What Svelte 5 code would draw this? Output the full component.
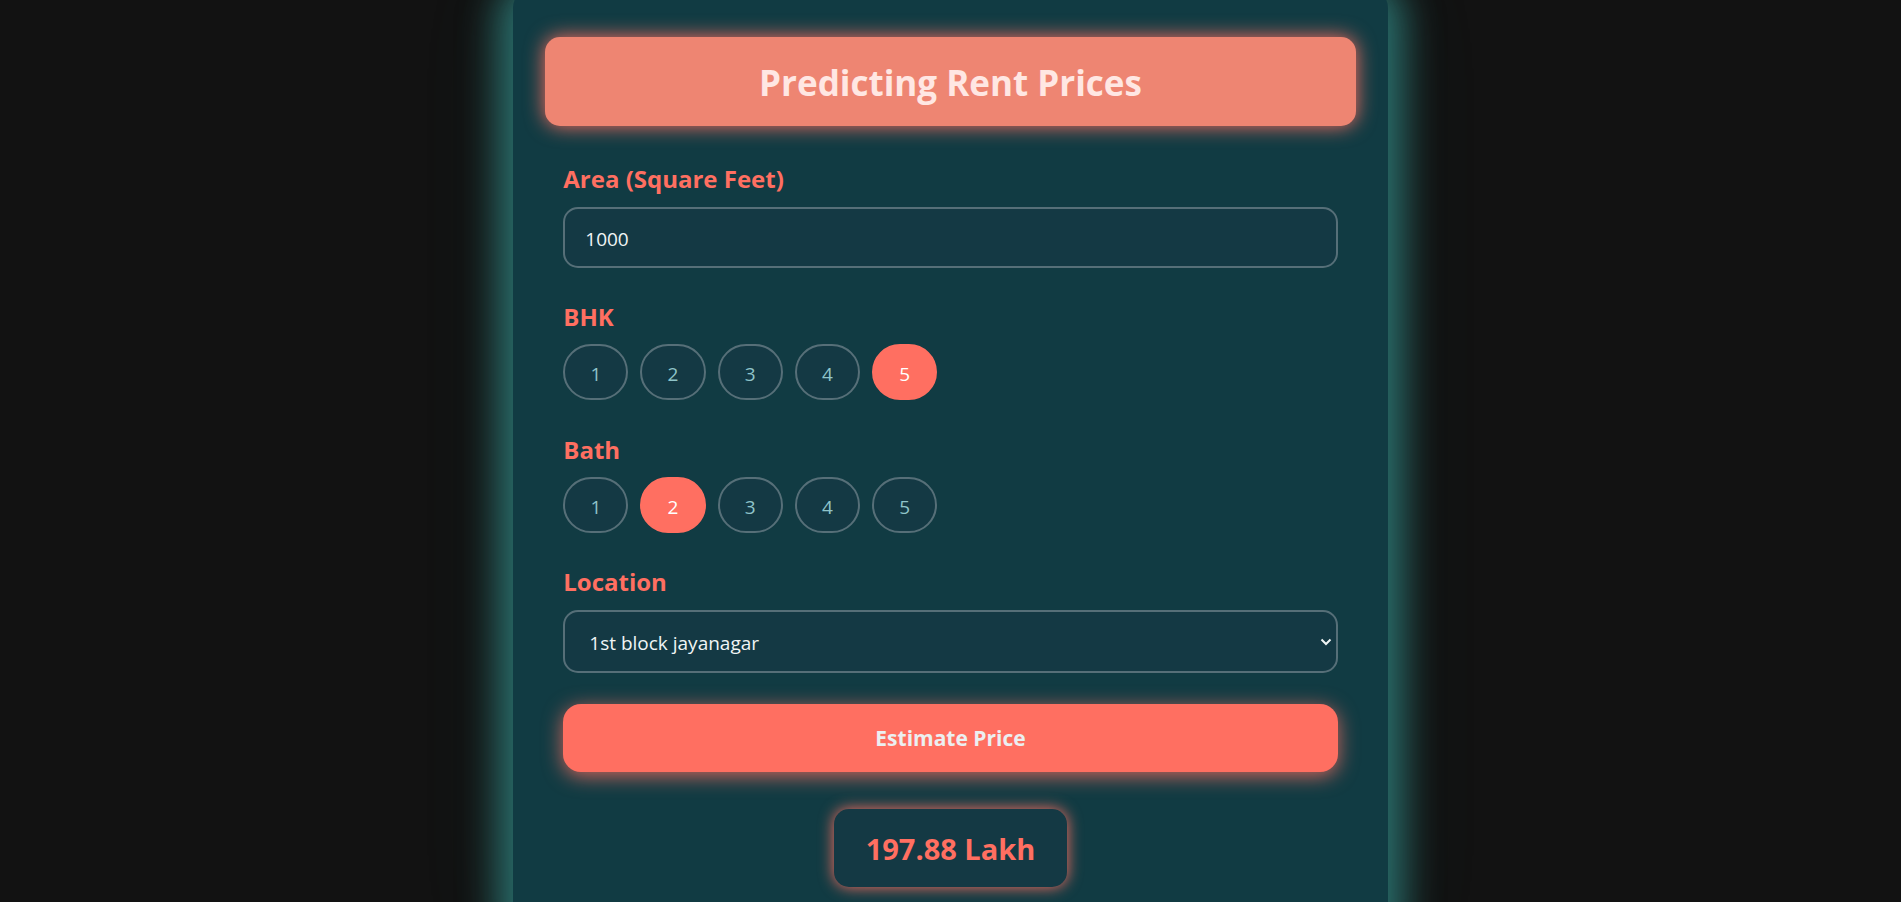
<script>
  const choices = [1, 2, 3, 4, 5];
  const locations = ['1st block jayanagar', '1st phase jp nagar', '2nd phase judicial layout'];

  let area = $state('1000');
  let bhk = $state(5);
  let bath = $state(2);
  let location = $state(locations[0]);
</script>

{#snippet picker(name, title, current, choose)}
  <fieldset>
    <legend>{title}</legend>
    <div class="pills">
      {#each choices as n}
        <label class="pill">
          <input type="radio" {name} value={n} checked={current === n} onchange={() => choose(n)} />
          <span>{n}</span>
        </label>
      {/each}
    </div>
  </fieldset>
{/snippet}

<main class="page">
  <div class="card">
    <h1>Predicting Rent Prices</h1>
    <form onsubmit={(e) => e.preventDefault()}>
      <label class="caption" for="area">Area (Square Feet)</label>
      <input class="control" id="area" type="text" bind:value={area} />

      {@render picker('bhk', 'BHK', bhk, (n) => (bhk = n))}
      {@render picker('bath', 'Bath', bath, (n) => (bath = n))}

      <label class="caption" for="location">Location</label>
      <div class="dropdown">
        <select class="control" id="location" bind:value={location}>
          {#each locations as place}
            <option>{place}</option>
          {/each}
        </select>
        <svg viewBox="0 0 12 8" aria-hidden="true"><path d="M1.500 1.500 6 6l4.500-4.500" /></svg>
      </div>

      <button type="submit">Estimate Price</button>
      <output>197.88 Lakh</output>
    </form>
  </div>
</main>

<style>
  :global(body) {
    background: #121212;
    overflow: hidden;
  }

  * {
    box-sizing: border-box;
  }

  .page {
    display: flex;
    justify-content: center;
    align-items: flex-start;
    height: 100vh;
    font-family: 'Segoe UI', 'Open Sans', sans-serif;
  }

  .card {
    width: 46%;
    min-width: 480px;
    margin-top: -12px;
    padding: 49px 32px;
    border-radius: 20px;
    background: #113b43;
    box-shadow: 0 8px 36px 16px rgba(60, 185, 182, 0.53), 0 0 100px rgba(64, 185, 178, 0.1);
  }

  h1 {
    margin: 0;
    padding: 21px 20px 19px;
    border-radius: 15px;
    background: #ee8572;
    box-shadow: 0 0 20px #ff6f61;
    color: #ffe7e3;
    font-size: 35px;
    line-height: 49px;
    font-weight: 700;
    text-align: center;
  }

  form {
    display: flex;
    flex-direction: column;
    padding: 36px 18px 0;
  }

  .caption,
  legend {
    padding: 0;
    margin-bottom: 11px;
    color: #ff6f61;
    font-size: 24px;
    line-height: 34px;
    font-weight: 700;
  }

  legend {
    margin-bottom: 10px;
  }

  .control {
    width: 100%;
    height: 61px;
    margin: 0 0 32px;
    padding: 2px 20px 0;
    border: 2px solid #566f78;
    border-radius: 15px;
    background: #143944;
    color: #f0f5f5;
    font-family: inherit;
    font-size: 19px;
  }

  .dropdown {
    position: relative;
    margin-bottom: 31px;
  }

  .dropdown .control {
    display: block;
    height: 63px;
    margin: 0;
    padding: 2px 24px 0;
    appearance: none;
  }

  .dropdown svg {
    position: absolute;
    top: 28px;
    right: 6px;
    width: 12px;
    height: 8px;
    fill: none;
    stroke: #f0f5f5;
    stroke-width: 2;
    pointer-events: none;
  }

  fieldset {
    min-width: 0;
    margin: 0 0 33px;
    padding: 0;
    border: 0;
  }

  fieldset + .caption {
    margin-top: -1px;
  }

  .pills {
    display: grid;
    grid-template-columns: repeat(5, 1fr);
    gap: 12px;
    width: 374px;
  }

  .pill {
    position: relative;
    cursor: pointer;
  }

  .pill input {
    position: absolute;
    inset: 0;
    margin: 0;
    opacity: 0;
  }

  .pill span {
    display: block;
    height: 56px;
    border: 2px solid #566f78;
    border-radius: 28px;
    background: #143944;
    color: #8fc4c9;
    font-size: 19px;
    line-height: 56px;
    text-align: center;
  }

  .pill input:checked + span {
    border-color: #ff6f61;
    background: #ff6f61;
    color: #fff;
  }

  button {
    height: 68px;
    padding: 0 20px;
    border: 0;
    border-radius: 18px;
    background: #ff6f61;
    box-shadow: 0 4px 20px rgba(255, 111, 97, 0.8);
    color: #eceff1;
    font-family: inherit;
    font-size: 21px;
    font-weight: 700;
  }

  output {
    align-self: center;
    margin-top: 37px;
    padding: 20px 32px 18px;
    border-radius: 15px;
    background: #143944;
    box-shadow: 0 0 15px #ff6f61;
    color: #ff6f61;
    font-size: 29px;
    line-height: 40px;
    font-weight: 700;
  }
</style>
